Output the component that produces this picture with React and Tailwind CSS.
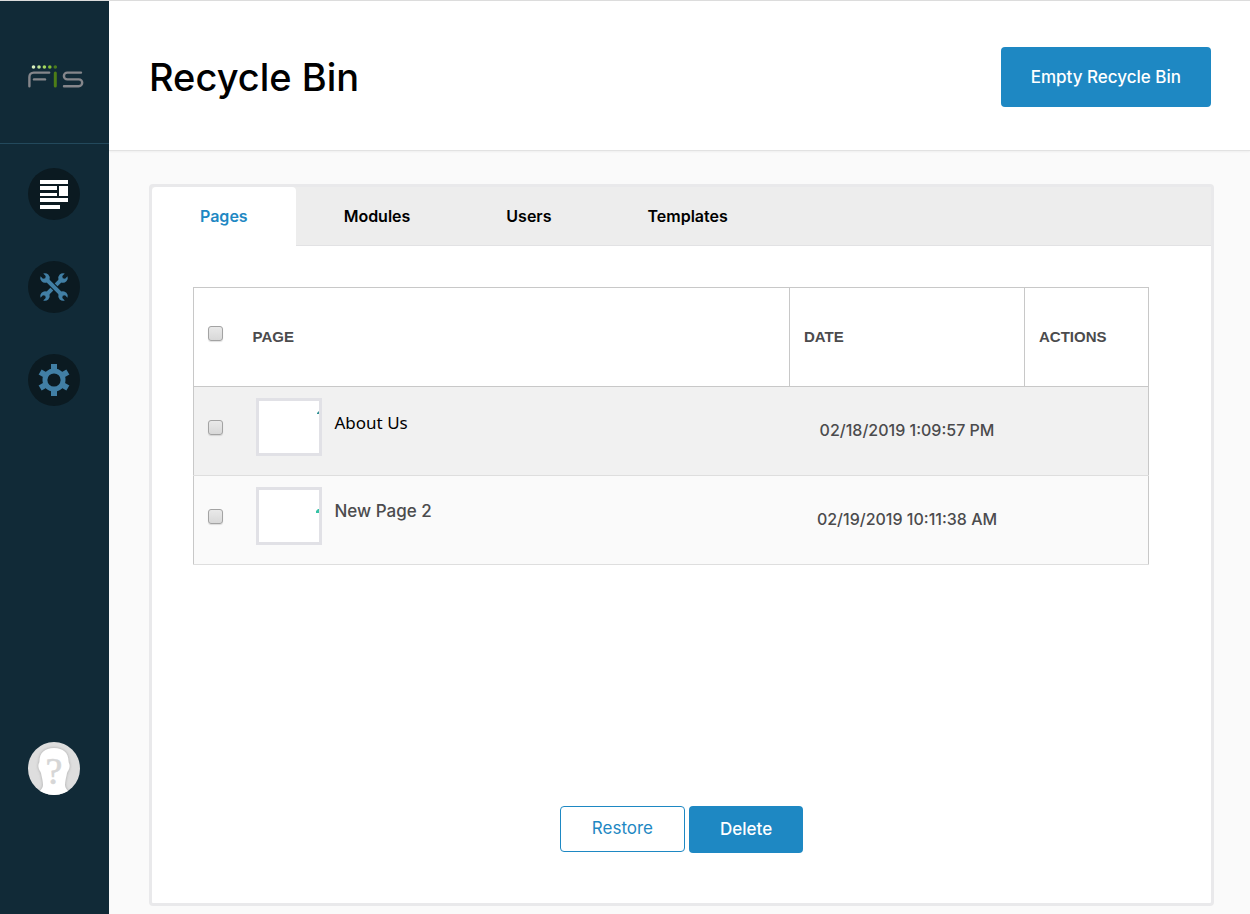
import { useState } from 'react'

const tabs = ['Pages', 'Modules', 'Users', 'Templates']

const pages = [
  { id: 1, name: 'About Us', date: '02/18/2019 1:09:57 PM', row: 'bg-[#f1f1f1]', label: "font-['Noto_Sans'] text-black", mark: 'M58 12l2-2v3h-2z', markColor: '#2f8f93' },
  { id: 2, name: 'New Page 2', date: '02/19/2019 10:11:38 AM', row: 'bg-[#fafafa]', label: 'font-medium text-[#4b4b4d]', mark: 'M57 21l2-2h1v4h-3z', markColor: '#35c2a5' },
]

function Logo() {
  return (
    <svg width="56" height="23" viewBox="0 0 56 23" fill="none" strokeWidth="2.4" strokeLinecap="round" role="img" aria-label="FIS">
      <circle cx="5.5" cy="2" r="1.8" fill="#d9efc0" />
      <circle cx="11" cy="2" r="1.8" fill="#c0e596" />
      <circle cx="16.4" cy="2" r="1.8" fill="#a5d860" />
      <circle cx="21.8" cy="2" r="1.8" fill="#83bd35" />
      <circle cx="27.3" cy="2" r="1.8" fill="#4a7a1c" />
      <g stroke="#85868b">
        <path d="M1.4 21.2V12c0-2.8 1.6-4.4 4.4-4.4h15.4" />
        <path d="M6 14.4h11" />
        <path d="M53 7.6H39.3a3.4 3.4 0 0 0 0 6.8h11.5a3.4 3.4 0 0 1 0 6.8H36" />
      </g>
      <path d="M27.3 7.9v13" stroke="#4d7d17" strokeWidth="3" />
    </svg>
  )
}

function ContentIcon() {
  return (
    <svg width="28" height="29" viewBox="0 0 28 29" fill="#fff" aria-hidden="true">
      <path d="M0 0h28v4H0zM0 6h17v4H0zM0 13h17v3H0zM19 6h9v10h-9zM0 18h28v4H0zM0 25h20v4H0z" />
    </svg>
  )
}

function Wrench() {
  return (
    <>
      <path d="M-2.300-11h4.600v22h-4.600z" />
      <path d="M-2.200-19.500V-15.500L0-14l2.200-1.500v-4A5.600 5.600 0 0 1 2.300-9.500h-4.600A5.600 5.600 0 0 1-2.200-19.500z" />
      <path d="M-2.200 19.500V15.500L0 14l2.200 1.500v4A5.600 5.600 0 0 0 2.300 9.500h-4.600A5.600 5.600 0 0 0-2.200 19.500z" />
    </>
  )
}

function ToolsIcon() {
  return (
    <svg width="30" height="30" viewBox="-17 -17 34 34" fill="#417fa5" aria-hidden="true">
      <g transform="rotate(45)"><Wrench /></g>
      <path d="M-5-5L5 5" stroke="#0b1a21" strokeWidth="7" />
      <g transform="rotate(-45)"><Wrench /></g>
    </svg>
  )
}

function GearIcon() {
  return (
    <svg width="32" height="34" viewBox="-16 -17 32 34" aria-hidden="true">
      <g fill="#417fa5">
        <path d="M-3-16H3V16H-3z" />
        <path d="M-3-16H3V16H-3z" transform="rotate(60)" />
        <path d="M-3-16H3V16H-3z" transform="rotate(-60)" />
        <circle r="11.5" />
      </g>
      <circle r="6.6" fill="#0b1a21" />
    </svg>
  )
}

function Avatar() {
  return (
    <svg width="52" height="53" viewBox="0 0 52 53" role="img" aria-label="User profile">
      <defs>
        <clipPath id="avatar-clip"><ellipse cx="26" cy="26.5" rx="26" ry="26.5" /></clipPath>
        <filter id="avatar-shade" x="-20%" y="-20%" width="140%" height="140%">
          <feDropShadow dx="0" dy="0" stdDeviation="1.5" floodColor="#888" floodOpacity="0.7" />
        </filter>
      </defs>
      <g clipPath="url(#avatar-clip)">
        <path d="M0 0h52v53H0z" fill="#dedede" />
        <path d="M26 6c-9 0-14.5 5-14.5 13 0 2-1.500 3-1 6 .4 3 2 4 2.500 6 1 5 2 8 2 12 0 4-4 6-7 11h36c-3-5-7-7-7-11 0-4 1-7 2-12 .5-2 2.100-3 2.500-6 .5-3-1-4-1-6C40.500 11 35 6 26 6z" fill="#fff" filter="url(#avatar-shade)" />
        <text x="26" y="42" textAnchor="middle" fill="#d6d6d6" stroke="#d6d6d6" strokeWidth="0.6" className="font-['Liberation_Serif'] text-[38px]">?</text>
      </g>
    </svg>
  )
}

function Check({ label, ...props }) {
  return (
    <input
      type="checkbox"
      aria-label={label}
      className="block size-[15px] appearance-none rounded-[3px] border border-[#a3a3a3] bg-linear-to-b from-[#e9e9e9] to-[#d8d8d8] shadow-[0_1px_1px_rgba(0,0,0,0.12)] checked:from-[#1e88c3] checked:to-[#1e88c3]"
      {...props}
    />
  )
}

function NavButton({ label, children }) {
  return (
    <button type="button" aria-label={label} className="flex size-[52px] items-center justify-center rounded-full bg-[#0b1a21]">
      {children}
    </button>
  )
}

export default function App() {
  const [tab, setTab] = useState('Pages')
  const [selected, setSelected] = useState([])

  const toggle = id => setSelected(s => (s.includes(id) ? s.filter(x => x !== id) : [...s, id]))
  const toggleAll = () => setSelected(s => (s.length === pages.length ? [] : pages.map(p => p.id)))

  return (
    <div className="flex min-h-screen border-t border-[#dcdcdc] bg-[#fafafa] font-['Inter',sans-serif]">

      {/* Sidebar */}
      <aside className="flex w-[109px] shrink-0 flex-col items-start bg-[#112a37]">
        <div className="h-[143px] w-full border-b border-[#23495c] pt-16 pl-7">
          <Logo />
        </div>
        <nav className="mt-6 ml-7 flex flex-col gap-[41px]">
          <NavButton label="Content"><ContentIcon /></NavButton>
          <NavButton label="Manage"><ToolsIcon /></NavButton>
          <NavButton label="Settings"><GearIcon /></NavButton>
        </nav>
        <button type="button" className="mt-auto mb-[119px] ml-7 rounded-full"><Avatar /></button>
      </aside>

      <div className="flex min-w-0 flex-1 flex-col">

        {/* Header */}
        <header className="flex h-[150px] items-center justify-between border-b border-[#e2e2e2] bg-white pt-0.5 pr-[39px] pl-10 shadow-[0_1px_2px_rgba(0,0,0,0.05)]">
          <h1 className="pt-0.5 text-[38px] font-medium text-black">Recycle Bin</h1>
          <button type="button" className="h-[60px] rounded-[4px] bg-[#1e88c3] px-[30px] pt-0.5 text-[17px] font-medium text-white">
            Empty Recycle Bin
          </button>
        </header>

        {/* Panel */}
        <main className="mt-[33px] mr-9 mb-2 ml-10 flex flex-1 flex-col rounded-[4px] border-3 border-[#e9e9eb] bg-white">
          <div role="tablist" className="flex h-[59px] bg-[#ededed]">
            {tabs.map(t => (
              <button
                key={t}
                type="button"
                role="tab"
                aria-selected={t === tab}
                onClick={() => setTab(t)}
                className={t === tab
                  ? 'rounded-t-[4px] border-b border-white bg-white px-12 text-base font-semibold text-[#1e88c3]'
                  : 'border-b border-[#e2e2e4] px-12 text-base font-semibold text-black'}
              >
                {t}
              </button>
            ))}
            <div className="flex-1 border-b border-[#e2e2e4]" />
          </div>

          <div className="mt-[41px] mr-[62px] ml-[41px]">
            <table className="w-full table-fixed border-collapse border-x border-[#c8c8c8] text-left text-[#4b4b4d]">
              <colgroup>
                <col className="w-[59px]" />
                <col />
                <col className="w-[235px]" />
                <col className="w-[124px]" />
              </colgroup>
              <thead>
                <tr className="h-[99px] border-y border-[#c8c8c8] font-['Liberation_Sans'] text-[15px]">
                  <th className="pb-2 pl-[14px]">
                    <Check label="Select all pages" checked={selected.length === pages.length} onChange={toggleAll} />
                  </th>
                  <th className="font-bold">PAGE</th>
                  <th className="border-l border-[#c8c8c8] pl-[14px] font-bold">DATE</th>
                  <th className="border-l border-[#c8c8c8] pl-[14px] font-bold">ACTIONS</th>
                </tr>
              </thead>
              <tbody>
                {pages.map(p => (
                  <tr key={p.id} className={`h-[89px] border-b border-b-[#dedede] ${p.row}`}>
                    <td className="pb-2 pl-[14px]">
                      <Check label={`Select ${p.name}`} checked={selected.includes(p.id)} onChange={() => toggle(p.id)} />
                    </td>
                    <td className="pb-2 pl-[3px]">
                      <div className="flex items-center gap-[13px]">
                        <svg width="66" height="58" viewBox="0 0 60 52" className="border-3 border-[#e1e1e6] bg-white" aria-hidden="true">
                          <path d={p.mark} fill={p.markColor} />
                        </svg>
                        <span className={`pb-2 text-[17px] ${p.label}`}>{p.name}</span>
                      </div>
                    </td>
                    <td className="pb-0.5 text-center text-base font-medium">{p.date}</td>
                    <td />
                  </tr>
                ))}
              </tbody>
            </table>
          </div>

          <div className="mt-auto flex items-start justify-center gap-1 pb-[50px] text-[17px]">
            <button type="button" className="h-[46px] rounded-[4px] border border-[#1e88c3] bg-white px-[31px] text-[#1e88c3]">Restore</button>
            <button type="button" className="h-[47px] rounded-[4px] bg-[#1e88c3] px-[31px] font-medium text-white">Delete</button>
          </div>
        </main>
      </div>
    </div>
  )
}
